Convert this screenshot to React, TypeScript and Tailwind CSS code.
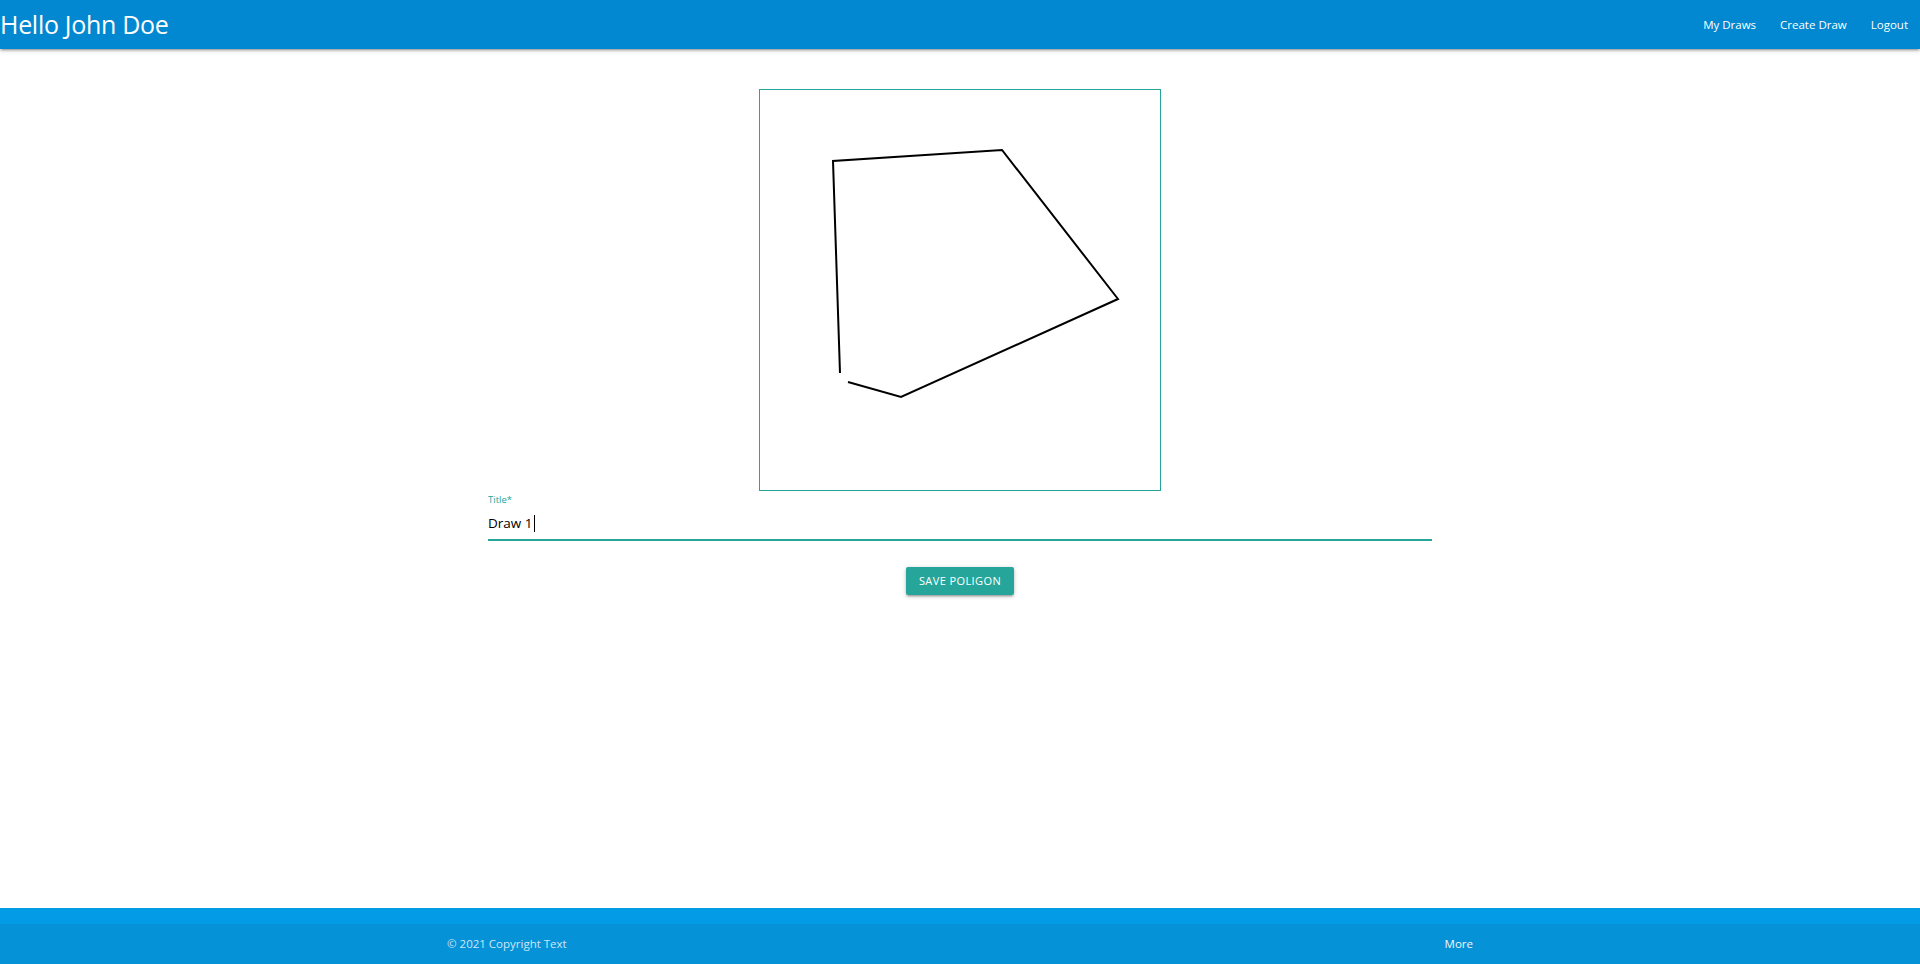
import React from 'react';

const font = { fontFamily: '"Open Sans", "Noto Sans", sans-serif' };

function NavBar() {
  return (
    <nav className="relative z-10 flex h-[49px] items-center justify-between bg-[#0288d1] text-white shadow-[0_2px_2px_0_rgba(0,0,0,0.14),0_3px_1px_-2px_rgba(0,0,0,0.12),0_1px_5px_0_rgba(0,0,0,0.2)]">
      <a className="text-[25px] leading-none tracking-[-0.3px]">Hello John Doe</a>
      <ul className="flex items-center text-[11.5px]">
        <li className="px-[12px]">My Draws</li>
        <li className="px-[12px]">Create Draw</li>
        <li className="px-[12px]">Logout</li>
      </ul>
    </nav>
  );
}

function DrawCanvas() {
  // points as drawn by the user, canvas-local coordinates
  const points = '88,292 141,307 358,209 242,60 73,71 80,283';
  return (
    <div className="mx-auto h-[402px] w-[402px] border border-[#26a69a] bg-white">
      <svg width="400" height="400" viewBox="0 0 400 400">
        <polyline points={points} fill="none" stroke="#000" strokeWidth="2" strokeLinejoin="miter" />
      </svg>
    </div>
  );
}

function TitleField() {
  return (
    <div className="mx-auto mt-[2px] w-[944px]">
      <div className="h-[14px] text-[9.5px] leading-[14px] text-[#26a69a]">Title*</div>
      <div className="flex h-[34px] items-center border-b-2 border-[#26a69a] text-[13.5px] text-black">
        <span>Draw 1</span>
        <span className="ml-[1px] inline-block h-[17px] w-[1px] bg-black" />
      </div>
    </div>
  );
}

export default function App() {
  return (
    <div className="flex min-h-screen flex-col bg-white" style={font}>
      <NavBar />
      <main className="flex-1 pt-[40px]">
        <DrawCanvas />
        <TitleField />
        <div className="mt-[26px] flex justify-center">
          <button className="h-[28px] rounded-[2px] bg-[#26a69a] px-[13px] text-[11px] uppercase tracking-[0.4px] text-white shadow-[0_2px_2px_0_rgba(0,0,0,0.14),0_3px_1px_-2px_rgba(0,0,0,0.12),0_1px_5px_0_rgba(0,0,0,0.2)]">
            Save Poligon
          </button>
        </div>
      </main>
      <footer className="bg-[#039be5] pt-[16px] text-white">
        <div className="h-[40px] bg-[rgba(51,51,51,0.08)]">
          <div className="mx-auto flex h-full w-[1026px] items-center justify-between text-[11.5px] text-[rgba(255,255,255,0.8)]">
            <span>© 2021 Copyright Text</span>
            <a className="text-[#f5f5f5]">More</a>
          </div>
        </div>
      </footer>
    </div>
  );
}
